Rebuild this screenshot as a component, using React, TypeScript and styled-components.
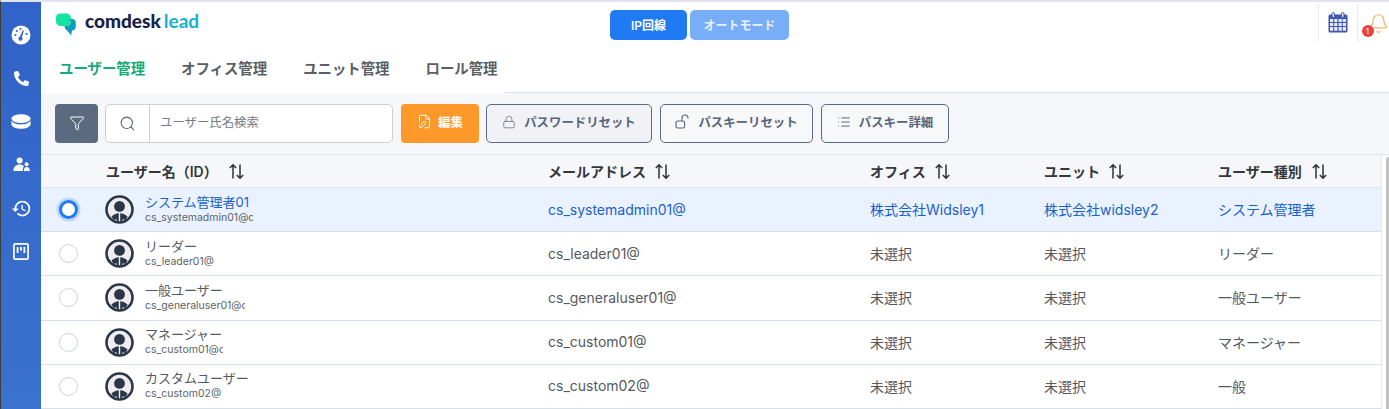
import styled, { createGlobalStyle } from "styled-components";
import { FilePen, Filter, List, Lock, Search, Bell } from "lucide-react";
import { FaPhoneAlt } from "react-icons/fa";
import { MdHistory } from "react-icons/md";

const FONT = `Inter, "Noto Sans CJK JP", "Noto Sans", sans-serif`;

const GlobalStyle = createGlobalStyle`
	html, body {
		margin: 0;
		padding: 0;
		height: 100%;
		overflow: hidden;
		background: #fff;
		font-family: ${FONT};
	}
	* {
		box-sizing: border-box;
	}
`;

type User = {
	name: string;
	id: string;
	clip?: number;
	mail: string;
	office: string;
	unit: string;
	kind: string;
	selected?: boolean;
};

const users: User[] = [
	{
		name: "システム管理者01",
		id: "cs_systemadmin01@comdesk",
		clip: 108,
		mail: "cs_systemadmin01@",
		office: "株式会社Widsley1",
		unit: "株式会社widsley2",
		kind: "システム管理者",
		selected: true,
	},
	{ name: "リーダー", id: "cs_leader01@", mail: "cs_leader01@", office: "未選択", unit: "未選択", kind: "リーダー" },
	{
		name: "一般ユーザー",
		id: "cs_generaluser01@comdesk",
		clip: 100,
		mail: "cs_generaluser01@",
		office: "未選択",
		unit: "未選択",
		kind: "一般ユーザー",
	},
	{
		name: "マネージャー",
		id: "cs_custom01@comdesk",
		clip: 78,
		mail: "cs_custom01@",
		office: "未選択",
		unit: "未選択",
		kind: "マネージャー",
	},
	{ name: "カスタムユーザー", id: "cs_custom02@", mail: "cs_custom02@", office: "未選択", unit: "未選択", kind: "一般" },
];

const GaugeIcon = () => (
	<svg width="20" height="20" viewBox="0 0 20 20">
		<circle cx="10" cy="10" r="9.5" fill="#fff" />
		<path d="M11.8 5.2 L12.9 5.6 L10.9 12.2 A2 2 0 1 1 8.8 11.8 Z" fill="#3464c8" />
		<circle cx="4.4" cy="10" r="1.1" fill="#3464c8" />
		<circle cx="5.8" cy="6" r="1.1" fill="#3464c8" />
		<circle cx="9.4" cy="4" r="1.1" fill="#3464c8" />
		<circle cx="15.6" cy="9" r="1.1" fill="#3464c8" />
	</svg>
);

const DiskIcon = () => (
	<svg width="20" height="15" viewBox="0 0 20 15">
		<ellipse cx="10" cy="4.6" rx="9.6" ry="4.4" fill="#fff" />
		<path d="M0.4 6.6 C2 9.6 6 10.4 10 10.4 C14 10.4 18 9.6 19.6 6.6 L19.6 10 C19.6 13 15 14.8 10 14.8 C5 14.8 0.4 13 0.4 10 Z" fill="#fff" />
	</svg>
);

const PeopleIcon = () => (
	<svg width="17" height="15" viewBox="0 0 17 15">
		<circle cx="6.6" cy="3.4" r="3" fill="#fff" />
		<path d="M0.4 14 C0.4 9.6 3 7.4 6.6 7.4 C8.6 7.4 10 8 11 9.2 C10 10.2 9.6 12 10 14 Z" fill="#fff" />
		<circle cx="13.6" cy="7.2" r="2" fill="#fff" />
		<path d="M11 14 C10.6 11.6 11.8 10 13.6 10 C15.6 10 16.8 11.6 16.8 14 Z" fill="#fff" />
	</svg>
);

const BoardIcon = () => (
	<svg width="16" height="17" viewBox="0 0 16 17" fill="none">
		<rect x="0.9" y="0.9" width="14.2" height="15.2" rx="1.2" stroke="#fff" strokeWidth="1.7" />
		<path d="M4.6 4 V10 M8 4 V7.6 M11.4 4 V10" stroke="#fff" strokeWidth="1.8" />
	</svg>
);

const CalendarIcon = () => (
	<svg width="20" height="21" viewBox="0 0 20 21">
		<rect x="0.5" y="2.5" width="19" height="18" rx="1.6" fill="#3f57ad" />
		<rect x="4" y="0.5" width="2.6" height="5" rx="1.3" fill="#dfe4f5" stroke="#3f57ad" />
		<rect x="13.4" y="0.5" width="2.6" height="5" rx="1.3" fill="#dfe4f5" stroke="#3f57ad" />
		<path
			d="M2 7h3.2v3H2zM6.2 7h3.2v3H6.2zM10.6 7h3.2v3h-3.2zM14.8 7H18v3h-3.2zM2 11h3.2v3H2zM6.2 11h3.2v3H6.2zM10.6 11h3.2v3h-3.2zM14.8 11H18v3h-3.2zM2 15h3.2v3.8H2zM6.2 15h3.2v3.8H6.2zM10.6 15h3.2v3.8h-3.2zM14.8 15H18v3.8h-3.2z"
			fill="#e4e8f7"
		/>
	</svg>
);

const LogoMark = () => (
	<svg width="20" height="23" viewBox="0 0 20 23">
		<path d="M4 0.5 H10 C13 0.5 15 2.6 15 5.5 V8 C15 11 13 13 10 13 H4 C1.6 13 0 11 0 8.6 V4.5 C0 2 1.6 0.5 4 0.5 Z" fill="#17e3a1" />
		<path d="M12 6 H16 C18.4 6 19.8 7.6 19.8 9.6 V13.5 C19.8 16 18.2 17.6 16 17.6 L15.2 22.6 L11 17.4 C9.4 16.4 8.6 15 8.6 13 H11 C13.6 13 15 11 15 8.6 C15 7.4 13.6 6.4 12 6 Z" fill="#0a9fc0" />
	</svg>
);

const Avatar = () => (
	<svg width="29" height="29" viewBox="0 0 29 29">
		<circle cx="14.5" cy="14.5" r="13" fill="#eeeeee" stroke="#2b3648" strokeWidth="2.6" />
		<circle cx="14.5" cy="11.4" r="5.4" fill="#2b3648" />
		<path d="M6.4 21.4 C8.6 19.4 11 18.4 13.8 18.2 V27 H12.2 L11.4 24.2 L8.6 25 Z" fill="#2b3648" />
		<path d="M22.6 21.4 C20.4 19.4 18 18.4 15.2 18.2 V27 H16.8 L17.6 24.2 L20.4 25 Z" fill="#2b3648" />
	</svg>
);

const SortIcon = () => (
	<svg width="17" height="17" viewBox="0 0 17 17" fill="none" stroke="#2f3136" strokeWidth="1.5">
		<path d="M5 15.5 V1.8 M1.8 5 L5 1.8 L8.2 5" />
		<path d="M12 1.5 V15.2 M8.8 12 L12 15.2 L15.2 12" />
	</svg>
);

const LockOpenIcon = () => (
	<svg width="15" height="15" viewBox="0 0 15 15" fill="none" stroke="#566579" strokeWidth="1.1">
		<rect x="1" y="7" width="8.6" height="7" rx="1.6" />
		<path d="M7 7 V4 C7 2.4 8.2 1 10 1 C11.8 1 13 2.4 13 4 V4.6" />
	</svg>
);

const App = () => {
	return (
		<>
			<GlobalStyle />
			<Page>
				<Sidebar>
					<SideItem><GaugeIcon /></SideItem>
					<SideItem><FaPhoneAlt size={15} color="#fff" /></SideItem>
					<SideItem><DiskIcon /></SideItem>
					<SideItem><PeopleIcon /></SideItem>
					<SideItem><MdHistory size={21} color="#fff" /></SideItem>
					<SideItem><BoardIcon /></SideItem>
				</Sidebar>
				<Main>
					<TopBar>
						<Logo>
							<LogoMark />
							<LogoText>
								comdesk<LogoLead>lead</LogoLead>
							</LogoText>
						</Logo>
						<ModeGroup>
							<ModeButton $active $width={77}>IP回線</ModeButton>
							<ModeButton $width={99}>オートモード</ModeButton>
						</ModeGroup>
						<TopIcons>
							<TopIconCell $width={39}><CalendarIcon /></TopIconCell>
							<TopIconCell $width={32}>
								<BellWrap>
									<Bell size={21} strokeWidth={1.4} color="#fbb468" />
									<BellBadge>1</BellBadge>
								</BellWrap>
							</TopIconCell>
						</TopIcons>
					</TopBar>
					<TabRow>
						<Tabs>
							<Tab $active>ユーザー管理</Tab>
							<Tab>オフィス管理</Tab>
							<Tab>ユニット管理</Tab>
							<Tab>ロール管理</Tab>
						</Tabs>
						<TabFiller />
					</TabRow>
					<Toolbar>
						<FilterButton><Filter size={16} strokeWidth={1.5} color="#fff" /></FilterButton>
						<SearchBox>
							<SearchIcon><Search size={17} strokeWidth={1.5} color="#5b6472" /></SearchIcon>
							<SearchText>ユーザー氏名検索</SearchText>
						</SearchBox>
						<EditButton><FilePen size={15} strokeWidth={1.6} />編集</EditButton>
						<OutlineButton $width={166} $shaded><Lock size={14} strokeWidth={1.2} />パスワードリセット</OutlineButton>
						<OutlineButton $width={153}><LockOpenIcon />パスキーリセット</OutlineButton>
						<OutlineButton $width={128}><List size={14} strokeWidth={1.7} />パスキー詳細</OutlineButton>
					</Toolbar>
					<TableArea>
						<Table>
							<HeadRow>
								<span />
								<HeadCell>ユーザー名（ID）<SortGap $gap={10}><SortIcon /></SortGap></HeadCell>
								<HeadCell>メールアドレス<SortGap $gap={8}><SortIcon /></SortGap></HeadCell>
								<HeadCell>オフィス<SortGap $gap={8}><SortIcon /></SortGap></HeadCell>
								<HeadCell>ユニット<SortGap $gap={8}><SortIcon /></SortGap></HeadCell>
								<HeadCell>ユーザー種別<SortGap $gap={9}><SortIcon /></SortGap></HeadCell>
							</HeadRow>
							{users.map((user) => (
								<Row key={user.mail} $selected={user.selected}>
									<RadioCell><Radio $selected={user.selected} /></RadioCell>
									<UserCell>
										<Avatar />
										<UserText>
											<UserName>{user.name}</UserName>
											<UserId style={user.clip ? { width: user.clip } : undefined}>{user.id}</UserId>
										</UserText>
									</UserCell>
									<Cell>{user.mail}</Cell>
									<Cell>{user.office}</Cell>
									<Cell>{user.unit}</Cell>
									<Cell>{user.kind}</Cell>
								</Row>
							))}
						</Table>
						<ScrollTrack><ScrollThumb /></ScrollTrack>
					</TableArea>
				</Main>
			</Page>
		</>
	);
};

export default App;

const Page = styled.div`
	display: flex;
	width: 1389px;
	height: 409px;
	overflow: hidden;
	border-top: 2px solid #e2e2f0;
	border-left: 1px solid #3b3f38;
`;

const Sidebar = styled.nav`
	display: flex;
	flex-direction: column;
	align-items: center;
	flex: 0 0 40px;
	padding-top: 11px;
	background: linear-gradient(180deg, #3162c7 0%, #3a72cf 100%);
`;

const SideItem = styled.div`
	display: flex;
	align-items: center;
	justify-content: center;
	width: 100%;
	height: 43.4px;
`;

const Main = styled.div`
	display: flex;
	flex-direction: column;
	flex: 1;
	min-width: 0;
`;

const TopBar = styled.header`
	position: relative;
	display: flex;
	align-items: flex-start;
	height: 45px;
	background: #fff;
`;

const Logo = styled.div`
	display: flex;
	align-items: center;
	gap: 9px;
	padding: 11px 0 0 15px;
`;

const LogoText = styled.span`
	margin-top: -8px;
	font-family: Lato, "Liberation Sans", sans-serif;
	font-size: 19px;
	font-weight: 900;
	color: #18204a;
`;

const LogoLead = styled.span`
	margin-left: 3px;
	font-weight: 700;
	color: #13b3cf;
`;

const ModeGroup = styled.div`
	position: absolute;
	top: 8px;
	left: 569px;
	display: flex;
	gap: 3px;
`;

const ModeButton = styled.div<{ $active?: boolean; $width: number }>`
	display: flex;
	align-items: center;
	justify-content: center;
	width: ${(p) => p.$width}px;
	height: 30px;
	padding-bottom: 2px;
	border-radius: 5px;
	background: ${(p) => (p.$active ? "#1f7af3" : "#78adf8")};
	color: ${(p) => (p.$active ? "#fff" : "#e8f1fe")};
	font-size: 12px;
	font-weight: 600;
`;

const TopIcons = styled.div`
	display: flex;
	margin-left: auto;
	padding-top: 2px;
`;

const TopIconCell = styled.div<{ $width: number }>`
	display: flex;
	justify-content: center;
	width: ${(p) => p.$width}px;
	height: 38px;
	padding-top: 8px;
	border-left: 1px solid #e9e9e9;
`;

const BellWrap = styled.div`
	position: relative;
	margin-left: 9px;
	margin-top: 1px;
`;

const BellBadge = styled.span`
	position: absolute;
	left: -6px;
	top: 12px;
	width: 12px;
	height: 12px;
	border-radius: 50%;
	background: #e8413f;
	color: #fff;
	font-size: 8px;
	line-height: 12px;
	text-align: center;
`;

const TabRow = styled.div`
	display: flex;
	height: 46px;
	background: #fff;
`;

const Tabs = styled.div`
	display: flex;
	gap: 36px;
	padding: 0 8px 0 18px;
`;

const Tab = styled.div<{ $active?: boolean }>`
	padding-top: 10px;
	font-size: 14.4px;
	font-weight: 600;
	color: ${(p) => (p.$active ? "#14ab78" : "#5a5f66")};
`;

const TabFiller = styled.div`
	flex: 1;
	border-bottom: 1px solid #dcdfe4;
`;

const Toolbar = styled.div`
	display: flex;
	align-items: center;
	gap: 8px;
	height: 62px;
	padding: 0 0 1px 14px;
	background: #f5f7fa;
	border-bottom: 1px solid #e1e4ec;
`;

const FilterButton = styled.div`
	display: flex;
	align-items: center;
	justify-content: center;
	width: 43px;
	height: 39px;
	margin-right: -1px;
	border-radius: 4px;
	background: #5a6b80;
`;

const SearchBox = styled.div`
	display: flex;
	width: 288px;
	height: 39px;
	background: #fff;
	border: 1px solid #ccd0d6;
	border-radius: 5px;
`;

const SearchIcon = styled.div`
	display: flex;
	align-items: center;
	justify-content: center;
	width: 44px;
	border-right: 1px solid #ccd0d6;
`;

const SearchText = styled.div`
	align-self: center;
	padding: 0 0 3px 10px;
	font-size: 12.4px;
	color: #747b85;
`;

const EditButton = styled.div`
	display: flex;
	align-items: center;
	justify-content: center;
	gap: 6px;
	width: 78px;
	height: 39px;
	margin-right: -1px;
	padding-bottom: 3px;
	border-radius: 4px;
	background: #fd982a;
	color: #fff;
	font-size: 12.4px;
	font-weight: 600;
`;

const OutlineButton = styled.div<{ $width: number; $shaded?: boolean }>`
	display: flex;
	align-items: center;
	justify-content: center;
	gap: 8px;
	width: ${(p) => p.$width}px;
	height: 39px;
	padding-bottom: 3px;
	border: 1px solid #5a6b85;
	border-radius: 5px;
	background: ${(p) => (p.$shaded ? "#f0f2f5" : "#f6f8fa")};
	color: #566579;
	font-size: 12.4px;
	font-weight: 600;
`;

const TableArea = styled.div`
	display: flex;
	flex: 1;
	min-height: 0;
`;

const Table = styled.div`
	flex: 0 0 1340px;
`;

const COLUMNS = "65px 442px 322px 174px 174px 163px";

const HeadRow = styled.div`
	display: grid;
	grid-template-columns: ${COLUMNS};
	align-items: center;
	height: 33px;
	background: #f5f7fa;
	border-bottom: 1px solid #dfe5ee;
`;

const HeadCell = styled.div`
	display: flex;
	align-items: center;
	font-size: 14px;
	font-weight: 600;
	color: #33363b;
`;

const SortGap = styled.span<{ $gap: number }>`
	display: flex;
	margin-left: ${(p) => p.$gap}px;
`;

const Row = styled.div<{ $selected?: boolean }>`
	display: grid;
	grid-template-columns: ${COLUMNS};
	align-items: center;
	height: 44.2px;
	background: ${(p) => (p.$selected ? "#e9f2fe" : "#fff")};
	border-bottom: 1px solid #d9dfe6;
	color: ${(p) => (p.$selected ? "#1a5fd0" : "#55585e")};
`;

const RadioCell = styled.div`
	display: flex;
	justify-content: center;
	padding-right: 11px;
`;

const Radio = styled.span<{ $selected?: boolean }>`
	width: ${(p) => (p.$selected ? "13px" : "19px")};
	height: ${(p) => (p.$selected ? "13px" : "19px")};
	border-radius: 50%;
	background: #fff;
	border: 1px solid #ccd3dc;
	${(p) =>
		p.$selected &&
		`
		box-sizing: content-box;
		border: 3px solid #1f7af3;
		box-shadow: 0 0 0 2.5px #bcd7fb;
	`}
`;

const UserCell = styled.div`
	display: flex;
	align-items: center;
	gap: 11px;
	margin-left: -1px;
`;

const UserText = styled.div`
	display: flex;
	flex-direction: column;
	min-width: 0;
	margin-top: -2px;
`;

const UserName = styled.div`
	font-size: 13px;
	line-height: 16px;
`;

const UserId = styled.div`
	overflow: hidden;
	font-size: 10.5px;
	line-height: 13px;
	margin-top: 1px;
	white-space: nowrap;
	color: #5e6268;
`;

const Cell = styled.div`
	font-size: 14px;
	white-space: nowrap;
	margin-top: -1px;
`;

const ScrollTrack = styled.div`
	flex: 1;
	padding: 2px 0 0 4px;
	background: #fff;
	border-left: 1px solid #e8e8e8;
`;

const ScrollThumb = styled.div`
	width: 5px;
	height: 260px;
	border-radius: 3px;
	background: #c1c1c1;
`;
